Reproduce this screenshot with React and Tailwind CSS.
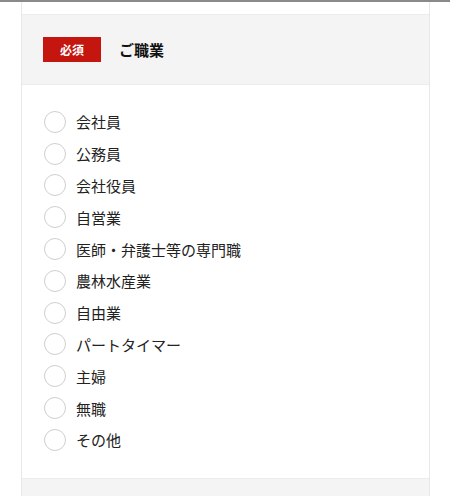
import React from 'react';

const options = [
  '会社員',
  '公務員',
  '会社役員',
  '自営業',
  '医師・弁護士等の専門職',
  '農林水産業',
  '自由業',
  'パートタイマー',
  '主婦',
  '無職',
  'その他',
];

const App = () => {
  return (
    <div
      className="w-[450px] h-[496px] overflow-hidden bg-white border-t-2 border-[#8a8a8a]"
      style={{ fontFamily: '"Noto Sans CJK JP", "Noto Sans", sans-serif' }}
    >
      <div className="ml-[21px] w-[409px] h-full border-x border-[#e8e8e8] flex flex-col">
        <div className="h-[12px] shrink-0" />
        <div className="h-[71px] shrink-0 bg-[#f4f4f4] border-y border-[#ececec] flex items-center pl-[21px]">
          <span className="w-[58px] h-[25px] bg-[#c4160f] text-white text-[12px] font-bold flex items-center justify-center leading-none">
            必須
          </span>
          <span className="ml-[18px] text-[15px] font-bold text-[#111] leading-none">ご職業</span>
        </div>
        <ul className="pt-[21px] pb-[22px] pl-[22px] flex flex-col">
          {options.map((opt) => (
            <li key={opt} className="h-[31.8px] flex items-center">
              <span className="w-[22px] h-[22px] rounded-full border border-[#cfcfcf] bg-white shrink-0" />
              <span className="ml-[10px] text-[15px] text-[#222] leading-none">{opt}</span>
            </li>
          ))}
        </ul>
        <div className="flex-1 bg-[#f4f4f4] border-t border-[#ececec]" />
      </div>
    </div>
  );
};

export default App;
